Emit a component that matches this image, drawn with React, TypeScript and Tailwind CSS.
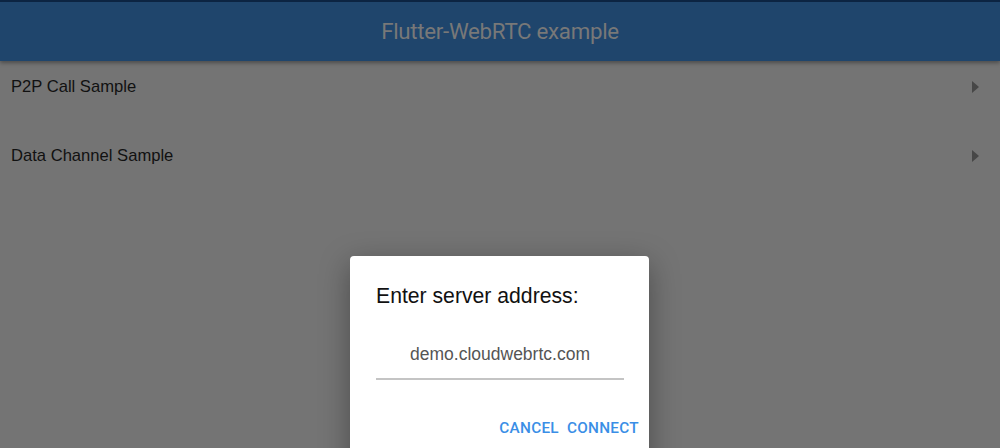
const items = ['P2P Call Sample', 'Data Channel Sample'];

const Arrow = () => (
  <svg width="7" height="12" viewBox="0 0 7 12" className="text-[#474747]">
    <path d="M0 0 L7 6 L0 12 Z" fill="currentColor" />
  </svg>
);

const App = () => {
  return (
    <div className="relative w-[1000px] h-[448px] overflow-hidden bg-[#747474] font-['Liberation_Sans',sans-serif]">
      <header className="h-[61px] flex items-center justify-center bg-[#1f456c] border-t-2 border-[#0c2442] shadow-[0_2px_4px_rgba(0,0,0,0.35)]">
        <h1 className="text-[22.3px] text-[#787878] font-['Roboto',sans-serif] tracking-[-0.3px]">Flutter-WebRTC example</h1>
      </header>

      <ul className="flex flex-col gap-[17px]">
        {items.map((label) => (
          <li key={label} className="h-[52px] flex items-center justify-between pl-[11px] pr-[21px]">
            <span className="text-[16.6px] text-[#111]">{label}</span>
            <Arrow />
          </li>
        ))}
      </ul>

      <div className="absolute left-[350px] top-[256px] w-[299px] h-[220px] bg-white rounded-[4px] shadow-[0_8px_30px_rgba(0,0,0,0.35)]">
        <div className="pl-[26px] pr-[25px] pt-[27px]">
          <h2 className="text-[21.2px] leading-[26px] text-[#111]">Enter server address:</h2>
          <div className="mt-[21px] h-[50px] flex items-center justify-center border-b-2 border-[#c4c4c4]">
            <span className="text-[17.5px] text-[#555]">demo.cloudwebrtc.com</span>
          </div>
        </div>
        <div className="flex justify-end gap-[8px] pr-[10px] mt-[38px]">
          <button className="text-[15.3px] leading-[20px] font-medium tracking-[0.3px] text-[#3a8ee6] font-['Roboto',sans-serif]">CANCEL</button>
          <button className="text-[15.3px] leading-[20px] font-medium tracking-[0.3px] text-[#3a8ee6] font-['Roboto',sans-serif]">CONNECT</button>
        </div>
      </div>
    </div>
  );
};

export default App;
